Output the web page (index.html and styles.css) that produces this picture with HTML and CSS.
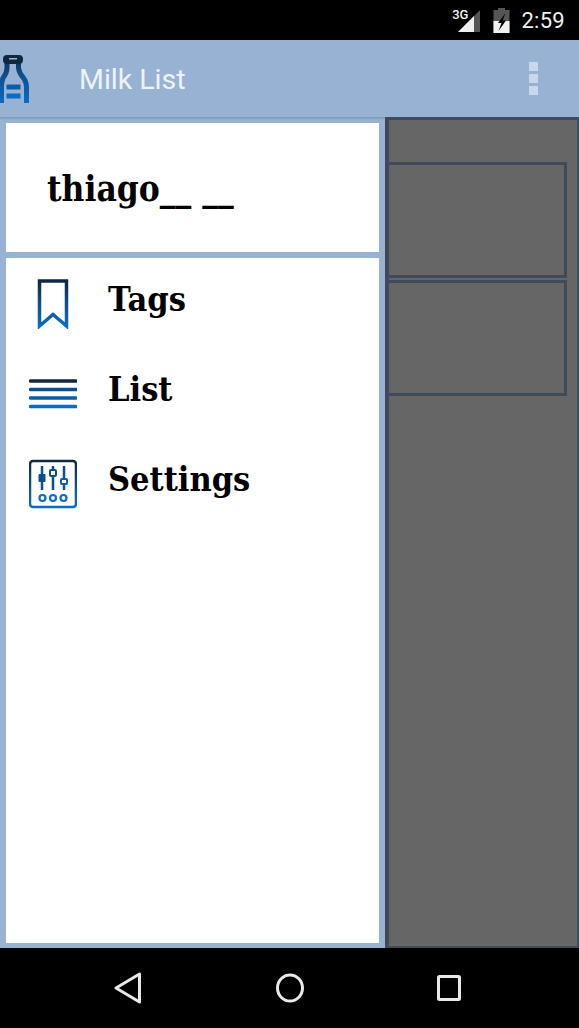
FILE: index.html
```html
<!DOCTYPE html>
<html>
  <head>
    <title>Milk List</title>
    <link rel="stylesheet" href="styles.css">
  </head>
  <body>
    <svg class="defs" width="0" height="0">
      <defs>
        <linearGradient id="ink" x1="0" y1="0" x2="0" y2="1">
          <stop offset="0" stop-color="#12263f"/>
          <stop offset="0.5" stop-color="#0d4f8e"/>
          <stop offset="1" stop-color="#0a6cc4"/>
        </linearGradient>
        <linearGradient id="bottle" gradientUnits="userSpaceOnUse" x1="0" y1="0" x2="0" y2="50">
          <stop offset="0" stop-color="#12263f"/>
          <stop offset="0.45" stop-color="#0d4f8e"/>
          <stop offset="1" stop-color="#0a6cc4"/>
        </linearGradient>
      </defs>
    </svg>
    <div class="phone">
      <div class="status-bar">
        <span class="net">3G</span>
        <svg class="signal" width="24" height="23" viewBox="0 0 24 23">
          <path d="M1 23 L23 1 V23 Z" fill="#555"/>
          <path d="M1 23 L17 7 V23 Z" fill="#f0f0f0"/>
        </svg>
        <svg class="battery" width="17" height="25" viewBox="0 0 17 25">
          <path d="M5 0 H12 V2 H16.500 V25 H0.500 V2 H5 Z" fill="#555"/>
          <path d="M0.500 13 H16.500 V25 H0.500 Z" fill="#f0f0f0"/>
          <path d="M12.500 5 L5 15 H8.500 L5.500 23 L13 12.500 H9.500 Z" fill="#000"/>
        </svg>
        <span class="clock">2:59</span>
      </div>

      <div class="app-bar">
        <svg class="logo" width="30" height="50" viewBox="0 0 30 50">
          <g fill="none" stroke="url(#bottle)" stroke-width="5">
            <path d="M7 9 V15 Q7 20 3 25 Q1.500 29 1.500 34 V50"/>
            <path d="M18.500 9 V15 Q19 20 23.500 25 Q26.500 29 26.500 34 V50"/>
          </g>
          <rect x="3" y="2" width="20" height="9" rx="4" fill="#12263f"/>
          <rect x="9" y="5" width="8" height="1.500" fill="#98b2d4"/>
          <rect x="6.500" y="31.500" width="14" height="5" fill="#0b5ea8"/>
          <rect x="6.500" y="40.500" width="14" height="5" fill="#0a6cc4"/>
        </svg>
        <span class="app-title">Milk List</span>
        <div class="overflow">
          <span class="dot"></span>
          <span class="dot"></span>
          <span class="dot"></span>
        </div>
      </div>

      <div class="main">
        <div class="drawer">
          <div class="drawer-head">thiago__ __</div>
          <div class="drawer-list">
            <div class="item">
              <svg class="item-icon" width="48" height="52" viewBox="0 0 48 52">
                <path d="M10.500 4 H37.500 V49 L24 37.500 L10.500 49 Z" fill="none" stroke="url(#ink)" stroke-width="3.500"/>
              </svg>
              <span class="item-label">Tags</span>
            </div>
            <div class="item">
              <svg class="item-icon" width="48" height="52" viewBox="0 0 48 52">
                <g stroke-width="3.500" stroke-linecap="round">
                  <path d="M1.500 14 H47" stroke="#12263f"/>
                  <path d="M1.500 22.500 H47" stroke="#0d4f8e"/>
                  <path d="M1.500 31 H47" stroke="#0b5ea8"/>
                  <path d="M1.500 39.500 H47" stroke="#0a6cc4"/>
                </g>
              </svg>
              <span class="item-label">List</span>
            </div>
            <div class="item">
              <svg class="item-icon" width="48" height="52" viewBox="0 0 48 52">
                <rect x="1" y="4" width="46" height="46" rx="3" fill="none" stroke="url(#ink)" stroke-width="2.500"/>
                <g fill="none" stroke="#0d4f8e" stroke-width="2.500">
                  <path d="M13 9 V33 M24 9 V33 M35 9 V33"/>
                </g>
                <rect x="9.500" y="17" width="7" height="8" rx="1" fill="#0d4f8e"/>
                <rect x="21" y="13" width="6" height="6" rx="1" fill="#fff" stroke="#0d4f8e" stroke-width="2"/>
                <rect x="32" y="22" width="6" height="5" rx="1" fill="#fff" stroke="#0b5ea8" stroke-width="2"/>
                <g fill="none" stroke="#0a6cc4" stroke-width="2.200">
                  <circle cx="13.500" cy="41" r="3"/>
                  <circle cx="24" cy="41" r="3"/>
                  <circle cx="34.500" cy="41" r="3"/>
                </g>
              </svg>
              <span class="item-label">Settings</span>
            </div>
          </div>
        </div>
        <div class="scrim">
          <div class="card"></div>
          <div class="card"></div>
        </div>
      </div>

      <div class="nav-bar">
        <svg width="28" height="32" viewBox="0 0 28 32">
          <path d="M25.500 2 V30 L2 16 Z" fill="none" stroke="#e8e8e8" stroke-width="3" stroke-linejoin="round"/>
        </svg>
        <svg width="28" height="30" viewBox="0 0 28 30">
          <ellipse cx="14" cy="15" rx="12.500" ry="13" fill="none" stroke="#e8e8e8" stroke-width="3"/>
        </svg>
        <svg width="24" height="26" viewBox="0 0 24 26">
          <rect x="1.500" y="1.500" width="21" height="23" rx="1" fill="none" stroke="#e8e8e8" stroke-width="3"/>
        </svg>
      </div>
    </div>
  </body>
</html>
```

FILE: styles.css
```css
html, body {
  margin: 0;
  padding: 0;
  background: #000;
}
.defs {
  display: block;
  height: 0;
}
.phone {
  width: 579px;
  height: 1028px;
  display: flex;
  flex-direction: column;
  overflow: hidden;
}
.status-bar {
  height: 40px;
  flex: none;
  background: #000;
  display: flex;
  align-items: center;
  padding-right: 14px;
  justify-content: flex-end;
  color: #f0f0f0;
  font-family: Roboto, sans-serif;
}
.net {
  font-size: 13px;
  font-weight: 500;
  align-self: flex-start;
  margin-top: 7px;
  margin-right: -11px;
}
.signal {
  margin-right: 12px;
}
.battery {
  margin-right: 11px;
  margin-top: 1px;
}
.clock {
  font-size: 22px;
  letter-spacing: 0.3px;
}
.app-bar {
  height: 77px;
  flex: none;
  background: #98b2d4;
  display: flex;
  align-items: center;
  overflow: hidden;
}
.logo {
  flex: none;
  align-self: flex-start;
  margin-top: 13px;
}
.app-title {
  margin-left: 49px;
  font-family: Roboto, sans-serif;
  font-size: 28.5px;
  color: #eef3f9;
  flex: 1;
  padding-top: 2px;
}
.overflow {
  display: flex;
  flex-direction: column;
  gap: 3px;
  margin-right: 41px;
}
.dot {
  width: 9px;
  height: 9px;
  background: #c9d7ea;
}
.main {
  flex: 1;
  display: flex;
  min-height: 0;
}
.drawer {
  width: 385px;
  flex: none;
  box-sizing: border-box;
  background: linear-gradient(#7f97b8, #98b2d4 3px);
  padding: 6px 6px 5px 6px;
  display: flex;
  flex-direction: column;
  gap: 6px;
}
.drawer-head {
  height: 129px;
  flex: none;
  background: #fff;
  box-sizing: border-box;
  padding: 41px 0 0 41px;
  font-family: "DejaVu Serif Condensed", "DejaVu Serif", serif;
  font-weight: bold;
  font-size: 35px;
  line-height: 50px;
  color: #000;
}
.drawer-list {
  flex: 1;
  background: #fff;
  padding-top: 17px;
  display: flex;
  flex-direction: column;
}
.item {
  height: 90px;
  display: flex;
  padding-left: 23px;
}
.item-icon {
  flex: none;
  margin-top: 2px;
}
.item-label {
  margin-left: 31px;
  padding-top: 1px;
  font-family: "DejaVu Serif Condensed", "DejaVu Serif", serif;
  font-weight: bold;
  font-size: 34px;
  line-height: 46px;
  color: #000;
}
.scrim {
  flex: 1;
  box-sizing: border-box;
  background: #666;
  border: 3px solid #3f4a5a;
  border-left-width: 4px;
  border-bottom-width: 2px;
  border-right-width: 2px;
  padding: 42px 10px 0 0;
  display: flex;
  flex-direction: column;
  gap: 2px;
}
.card {
  height: 116px;
  box-sizing: border-box;
  border: 3px solid #3f4a5a;
  border-left: none;
}
.nav-bar {
  height: 80px;
  flex: none;
  background: #000;
  display: flex;
  align-items: center;
  justify-content: space-between;
  padding: 0 118px 0 114px;
}
```
